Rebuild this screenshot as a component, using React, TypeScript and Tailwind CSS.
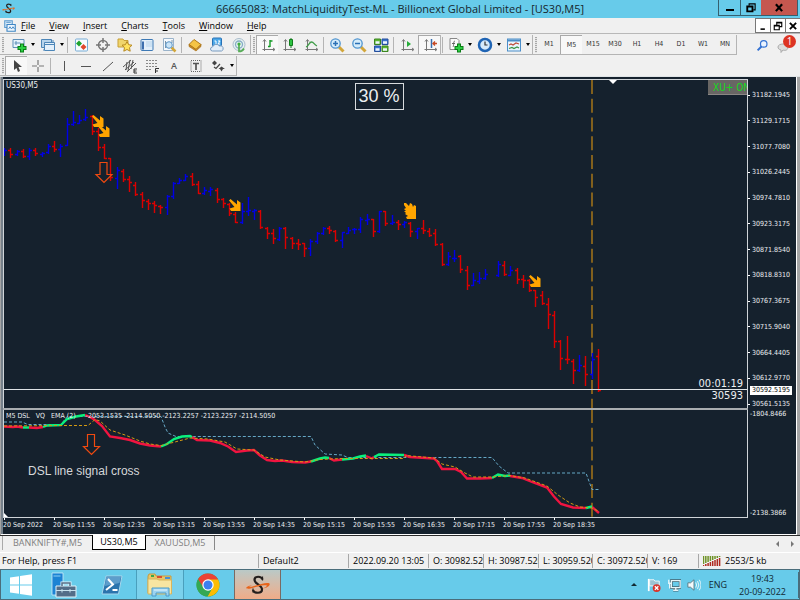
import type { ReactNode } from "react"
import clsx from "clsx"

type Bar = { up: boolean; high: number; low: number; open: number; close: number }

const u = (high: number, low: number, open: number, close: number): Bar => ({ up: true, high, low, open, close })
const d = (high: number, low: number, open: number, close: number): Bar => ({ up: false, high, low, open, close })

const BARS: (Bar | null)[] = [
  u(148, 155, 154, 150), d(148, 157, 150, 154), u(150, 155, 154, 151), d(149, 157, 151, 156),
  u(148, 159, 156, 150), d(148, 155, 150, 153), u(152, 156, 154, 153), u(144, 153, 152, 146),
  d(141, 151, 146, 149), u(144, 156, 149, 146), u(118, 145, 145, 124), u(111, 125, 124, 122),
  u(115, 123, 123, 120), u(109, 120, 119, 117), d(115, 134, 116, 131), d(128, 150, 131, 147),
  d(144, 158, 147, 158), d(158, 180, 158, 177), u(167, 188, 178, 170), d(169, 181, 171, 179),
  d(176, 191, 179, 182), d(182, 195, 185, 194), d(192, 207, 194, 200), d(199, 209, 201, 203),
  d(201, 212, 203, 205), d(205, 213, 206, 207), u(195, 214, 207, 196), u(182, 198, 196, 183),
  u(178, 183, 183, 180), u(174, 180, 180, 176), d(173, 185, 176, 184), d(181, 193, 184, 193),
  u(187, 194, 193, 190), u(187, 195, 191, 189), d(188, 202, 190, 199), d(198, 207, 199, 203),
  d(203, 215, 204, 213), d(212, 222, 214, 222), u(203, 223, 222, 211), u(197, 215, 211, 210),
  u(209, 219, 211, 210), d(210, 228, 211, 227), d(227, 238, 228, 233), d(229, 243, 233, 238),
  u(227, 240, 239, 228), d(227, 248, 228, 237), d(237, 248, 238, 243), d(239, 249, 243, 244),
  d(243, 256, 243, 248), u(239, 255, 248, 241), u(232, 243, 241, 233), u(227, 234, 233, 228),
  d(226, 233, 228, 230), d(230, 241, 231, 240), u(232, 247, 240, 232), u(227, 233, 233, 230),
  u(228, 233, 229, 229), u(217, 232, 229, 219), u(214, 224, 220, 219), d(219, 236, 219, 231),
  u(211, 232, 231, 211), d(211, 225, 211, 223), u(215, 224, 223, 222), d(220, 229, 222, 224),
  u(221, 227, 224, 222), d(222, 236, 223, 231), u(228, 238, 231, 228), d(220, 233, 228, 230),
  d(228, 236, 231, 235), d(229, 245, 233, 244), d(243, 265, 244, 264), u(252, 265, 264, 256),
  u(250, 261, 258, 258), d(255, 272, 256, 269), d(266, 289, 270, 285), u(273, 285, 285, 280),
  u(272, 283, 281, 278), u(269, 279, 278, 274), null, u(261, 276, 275, 264),
  d(261, 275, 265, 274), u(266, 275, 275, 270), d(268, 283, 270, 279), d(275, 287, 279, 280),
  d(279, 291, 280, 290), d(290, 306, 290, 297), d(291, 304, 295, 303), d(298, 328, 304, 314),
  d(311, 347, 315, 341), d(340, 369, 341, 358), d(336, 363, 359, 359), d(359, 383, 361, 370),
  u(355, 371, 370, 365), d(356, 385, 366, 374), u(353, 378, 374, 359), d(349, 391, 356, 390),
]

const PRICES = [
  "31182.1945", "31129.1715", "31077.7080", "31026.2445", "30974.7810", "30923.3175", "30871.8540",
  "30818.8310", "30767.3675", "30715.9040", "30664.4405", "30612.9770", "30561.5135",
]

const TIMES = [
  "20 Sep 2022", "20 Sep 11:55", "20 Sep 12:35", "20 Sep 13:15", "20 Sep 13:55", "20 Sep 14:35",
  "20 Sep 15:15", "20 Sep 15:55", "20 Sep 16:35", "20 Sep 17:15", "20 Sep 17:55", "20 Sep 18:35",
]

const DSL_DOWN = [
  "4,426.5 13,427 17,426.5 23,427.5",
  "29,427.5 37,428 43,427",
  "85,415 90,417 95,420 102,426 110,436.5 120,438 130,440 140,443.5 150,445.5 161,446.5",
  "192,437 197,440 210,440.5 220,443 228,446.5 236,452 247,450.5 254,450 260,455.5 267,460 275,461 282,460.5 292,462 305,462.5 311,461.5",
  "329,458 334,460.5 342,459.5",
  "366,456 372,458.5 374,457",
  "404,455 410,457 434,458.5 437,461 442,469 455,469 461,472 467,478.5 480,478.5 492,478",
  "510,476 522,478 532,482 547,487.5 554,496.5 561,504 573,507.5 586,508",
  "592,507 599,513",
]

const DSL_UP = [
  "23,427.5 29,427.5",
  "43,427 47,425.5 61,425 67,419 76,416.5 85,415",
  "161,446.5 167,444 174,439 182,436.5 190,436 192,437",
  "311,461.5 320,458.5 325,457.5 329,458",
  "342,459.5 353,458.5 360,456.5 366,455.5",
  "374,457 379,454.5 404,455",
  "492,478 498,474.5 505,476 510,475.5",
  "586,508 592,506.5",
]

const PRICE_TOP = `${((389 - 80) / 328) * 100}%`

function Icon({ children, size = 16 }: { children: ReactNode; size?: number }) {
  return (
    <svg width={size} height={size} viewBox="0 0 16 16" fill="none" aria-hidden="true" className="shrink-0">
      {children}
    </svg>
  )
}

const Caret = () => <span className="border-x-2 border-t-3 border-x-transparent border-t-black" />

const Sep = () => <span className="mr-0.5 ml-px h-4 w-px shrink-0 bg-[#b4b4b4]" />

const Grip = () => (
  <span className="mx-px h-4 w-[2px] shrink-0 bg-[repeating-linear-gradient(#a8a8a8_0_1px,#e4e4e4_1px_2px)]" />
)

function Tool({ label, pressed, menu, children }: { label: string; pressed?: boolean; menu?: boolean; children: ReactNode }) {
  return (
    <button
      aria-label={label}
      className={clsx(
        "flex h-full shrink-0 items-center justify-center",
        menu ? "w-[29px] gap-1" : "w-[22px]",
        pressed && "border-t border-l border-[#a9a9a9] bg-[#f8f8f8]",
      )}
    >
      {children}
      {menu && <Caret />}
    </button>
  )
}

function Group({ children }: { children: ReactNode }) {
  return (
    <div className="flex h-full shrink-0 items-center border-r border-b border-[#b4b4b4] pl-px">
      <Grip />
      {children}
    </div>
  )
}

const Axes = () => <path d="M4.500 3v11M2.500 12.500h12M3 4.500l1.500-2 1.500 2M13 11l2 1.500-2 1.500" stroke="#777" />

const Swirl = ({ size }: { size: number }) => (
  <svg width={size} height={size} viewBox="0 0 24 24" fill="none" aria-hidden="true">
    <path
      d="M16.500 6.500C15.500 3 8.500 2.500 8.500 7c0 4 7.500 5 7.500 9.500 0 4.500-8 4-9 .5"
      stroke="#241e1c"
      strokeWidth="2.200"
    />
    <path d="M7 19.500v-4M16.500 3.500v4" stroke="#241e1c" strokeWidth="1.200" />
    <path d="M8 14.500C-2 18-2 13 6 12.500c-4 1.300-3.500 2.300 2 .6C15 11 21 9 23.500 10.500c1 2-2 4.500-7 5 5-2 6-3.700 1.500-3.200-3.500.4-6.500 1.200-10 2.200z" fill="#e8641a" />
  </svg>
)

function TitleBar() {
  return (
    <header className="relative flex h-[18px] items-start justify-between bg-[#67cbea] pl-0.5">
      <span className="pt-0.5">
        <Swirl size={13} />
      </span>
      <h1 className="absolute inset-x-0 text-center font-['Open_Sans',sans-serif] text-[11px] leading-[18px] text-[#16262c]">
        66665083: MatchLiquidityTest-ML - Billionext Global Limited - [US30,M5]
      </h1>
      <div className="relative mr-0.5 flex h-4 border border-t-0 border-[#35606f]">
        <button aria-label="Minimize" className="flex w-[22px] items-center justify-center border-r border-[#35606f]">
          <span className="mt-1 h-0.5 w-2 bg-black" />
        </button>
        <button aria-label="Restore" className="flex w-5 items-center justify-center">
          <Icon size={12}>
            <path d="M5.500 5V2.500h8v8H11" stroke="#000" strokeWidth="1.500" />
            <path d="M3 6h7v6.500H3z" stroke="#000" strokeWidth="2.500" />
          </Icon>
        </button>
        <button aria-label="Close" className="flex w-9 items-center justify-center bg-[#c5574f]">
          <Icon size={10}>
            <path d="M3 2l10 11M13 2L3 13" stroke="#000" strokeWidth="3.500" />
          </Icon>
        </button>
      </div>
    </header>
  )
}

const MENU = ["File", "View", "Insert", "Charts", "Tools", "Window", "Help"]

function MenuBar() {
  return (
    <nav className="flex h-4 items-center border-b border-[#b8b8b8] bg-[#f0f0f0] pl-1 font-['Open_Sans',sans-serif] text-[9px] text-black">
      <Icon size={12}>
        <path d="M1 1h10v9H1z" fill="#dcecf9" stroke="#5b9bd0" strokeWidth="1.500" />
        <path d="M4 6h11v9H4z" fill="#eef6fd" stroke="#3f86c4" strokeWidth="1.500" />
        <path d="M6 12l2-3 2 3 2-3 2 3M3 3h6" stroke="#3f86c4" strokeWidth="1.200" />
      </Icon>
      <div className="ml-[5px] flex flex-1 gap-[14px]">
        {MENU.map((item) => (
          <button key={item}>
            <span className="underline">{item[0]}</span>
            {item.slice(1)}
          </button>
        ))}
      </div>
      <div className="flex h-full">
        {["Minimize chart", "Restore chart", "Close chart"].map((label, i) => (
          <button key={label} aria-label={label} className="flex w-[15px] items-center justify-center border border-r-0 border-[#777] bg-white">
            <Icon size={10}>
              {i === 0 && <path d="M4 13h7" stroke="#000" strokeWidth="2.500" />}
              {i === 1 && <path d="M6 6V2h8v7h-3M6 3h8M2 7h8v7H2zM2 8h8" stroke="#000" strokeWidth="1.800" />}
              {i === 2 && <path d="M3 3l10 10M13 3L3 13" stroke="#000" strokeWidth="3" />}
            </Icon>
          </button>
        ))}
      </div>
    </nav>
  )
}

const FRAMES = ["M1", "M5", "M15", "M30", "H1", "H4", "D1", "W1", "MN"]

const Plus = () => (
  <>
    <path d="M11 6.500v9M6.500 11h9" stroke="#0b7d16" strokeWidth="4" />
    <path d="M11 7.500v7M7.500 11h7" stroke="#2bd043" strokeWidth="2" />
  </>
)

function Zoom({ minus }: { minus?: boolean }) {
  return (
    <Icon>
      <path d="M10 10l4.500 4.500" stroke="#d2a63a" strokeWidth="3" />
      <circle cx="6.500" cy="6.500" r="4.700" fill="#d5ecfa" stroke="#4f94cf" strokeWidth="1.300" />
      <path d={minus ? "M4 6.500h5" : "M4 6.500h5M6.500 4v5"} stroke="#2b70b5" strokeWidth="1.500" />
    </Icon>
  )
}

function MainToolbar() {
  return (
    <div className="flex h-[21px] items-center bg-[#f0f0f0] pt-px font-['Open_Sans',sans-serif]">
      <Group>
        <span className="w-[3px]" />
        <Tool label="New chart" menu>
          <Icon>
            <path d="M2 2.500h11v8H2z" fill="#e8f3fc" stroke="#5d8fb8" />
            <path d="M3.500 6h6M5 4v4" stroke="#5d8fb8" />
            <Plus />
          </Icon>
        </Tool>
        <Tool label="Profiles" menu>
          <Icon>
            <path d="M1.500 2.500h10v8h-10z" fill="#b5d3ec" stroke="#4c86b8" />
            <path d="M4.500 5.500h10v8h-10z" fill="#e3f0fb" stroke="#4c86b8" />
            <path d="M5 7.500h9M3 13h1M11 4h3" stroke="#4c86b8" />
          </Icon>
        </Tool>
        <Sep />
        <Tool label="Market watch">
          <Icon>
            <rect x="2.500" y="2" width="12" height="12" rx="1" fill="#f7fbff" stroke="#77add6" />
            <path d="M6 3.500L9 6.500 6 9.500 3 6.500z" fill="#1fa32e" />
            <path d="M10.500 7l3 3-3 3-3-3z" fill="#e0482d" />
          </Icon>
        </Tool>
        <Tool label="Data window">
          <Icon>
            <circle cx="8" cy="8" r="4.500" stroke="#777" strokeWidth="1.500" />
            <path d="M8 1v5M8 10v5M1 8h5M10 8h5" stroke="#777" strokeWidth="1.500" />
          </Icon>
        </Tool>
        <Tool label="Navigator">
          <Icon>
            <path d="M1 2h5l1 1.500h4V10H1z" fill="#f0d56c" stroke="#c79f36" />
            <path d="M10 4.500l1.600 3.200 3.400.5-2.500 2.400.7 3.600-3.200-1.700-3.200 1.700.7-3.600L5 8.200l3.400-.5z" fill="#ffe25d" stroke="#b88a22" />
          </Icon>
        </Tool>
        <Tool label="Terminal">
          <Icon>
            <rect x="2" y="2.500" width="12" height="11" rx="1" fill="#e2effa" stroke="#3d79b5" />
            <path d="M3 4.500h2v8H3z" fill="#3d6fae" />
            <path d="M7 5h6M7 7h6M7 9h6" stroke="#b7d4ec" />
          </Icon>
        </Tool>
        <Tool label="Strategy tester">
          <Icon>
            <path d="M2.500 1.500h10v12h-10z" fill="#f5f9fd" stroke="#9ab3ca" />
            <path d="M4.500 4v7M11 3v3" stroke="#7b93a8" />
            <path d="M10.500 10.500l4 4" stroke="#d2a63a" strokeWidth="2.500" />
            <circle cx="8" cy="8" r="3.300" fill="#cce5f7" stroke="#5b94c5" />
          </Icon>
        </Tool>
        <Sep />
        <Tool label="New order">
          <Icon>
            <path d="M2 7.500L7 2.500l7 5-5 5z" fill="#f5c445" stroke="#b0791b" />
            <path d="M2 7.500v2l7 4.500 5-4.500v-2l-5 5z" fill="#c98a20" stroke="#a26c15" strokeWidth=".6" />
          </Icon>
        </Tool>
        <Tool label="Virtual hosting">
          <Icon>
            <rect x="3.500" y="1" width="9" height="8" rx="1" fill="#4ba7e8" stroke="#2872b6" />
            <path d="M5.500 4H7v3M9 4h2L9 7h2" stroke="#fff" />
            <path d="M3.500 14a2 2 0 010-4 4 4 0 017-1 2.500 2.500 0 012 5z" fill="#e2edf8" stroke="#7b9cc0" />
          </Icon>
        </Tool>
        <Tool label="Signals">
          <Icon>
            <circle cx="8" cy="7.500" r="6" fill="#e6f0f2" stroke="#a9bccb" />
            <circle cx="8" cy="7.500" r="3.500" stroke="#86aec4" strokeWidth="1.300" />
            <path d="M8 7v7.500c2 0 4-1 5-3" stroke="#56ad55" strokeWidth="1.700" />
            <circle cx="8" cy="7" r="1.600" fill="#3daf41" />
          </Icon>
        </Tool>
      </Group>
      <Group>
        <Tool label="Bar chart" pressed>
          <Icon>
            <Axes />
            <path d="M10 3v7M8 9.500h2M10 4h2.500" stroke="#139a25" strokeWidth="1.400" />
          </Icon>
        </Tool>
        <Tool label="Candlesticks">
          <Icon>
            <Axes />
            <path d="M10 1v10" stroke="#117c1d" />
            <path d="M8.500 2.500h3v6h-3z" fill="#2ec442" stroke="#117c1d" />
          </Icon>
        </Tool>
        <Tool label="Line chart">
          <Icon>
            <Axes />
            <path d="M3 10c3-1 3-5 5.500-5S11 8 14 9" stroke="#3f9c48" strokeWidth="1.300" />
          </Icon>
        </Tool>
        <Sep />
        <Tool label="Zoom in"><Zoom /></Tool>
        <Tool label="Zoom out"><Zoom minus /></Tool>
        <Tool label="Tile windows">
          <Icon>
            <path d="M1.500 2h6v5.500h-6zM9 9h6v5.500H9z" fill="#5cb731" stroke="#3b8520" />
            <path d="M9 2h6v5.500H9zM1.500 9h6v5.500h-6z" fill="#3b74cf" stroke="#254f9c" />
            <path d="M2.500 5.500h4M10 5.500h4M2.500 12.500h4M10 12.500h4" stroke="#eef6ff" strokeWidth="2.500" />
          </Icon>
        </Tool>
        <Sep />
        <Tool label="Auto scroll">
          <Icon>
            <Axes />
            <path d="M8 4l4 3-4 3z" fill="#25ac38" />
          </Icon>
        </Tool>
        <Tool label="Chart shift" pressed>
          <Icon>
            <Axes />
            <path d="M9.500 2v9" stroke="#376dae" strokeWidth="1.500" />
            <path d="M15 6.500h-4M13 4.500l-2 2 2 2" stroke="#c74a25" strokeWidth="1.400" />
          </Icon>
        </Tool>
      </Group>
      <div className="flex h-full items-center border-r border-b border-[#b4b4b4]">
        <Sep />
        <Tool label="Indicators" menu>
          <Icon>
            <path d="M2 1.500h7l2 2v9H2z" fill="#fafafa" stroke="#888" />
            <path d="M7 4c-2 0-1 5-2 6M4 6.500h3" stroke="#666" />
            <Plus />
          </Icon>
        </Tool>
        <Tool label="Periods" menu>
          <Icon>
            <circle cx="8" cy="8" r="6" fill="#d6eafa" stroke="#1f64b4" strokeWidth="2.500" />
            <path d="M8 4.500V8h2.500" stroke="#333" strokeWidth="1.200" />
          </Icon>
        </Tool>
        <Tool label="Templates" menu>
          <Icon>
            <rect x="1.500" y="2" width="13" height="12" fill="#eaf5fd" stroke="#4b8dc8" />
            <path d="M2 3.500h12" stroke="#4b8dc8" strokeWidth="2" />
            <path d="M3 8l2-1 2 1 3-2 3 1" stroke="#c24e39" strokeWidth="1.200" />
            <path d="M3 11.500l3-1 2 1 3-1.500 2 1" stroke="#3a9444" strokeWidth="1.200" />
          </Icon>
        </Tool>
      </div>
      <Group>
        {FRAMES.map((frame) => (
          <button
            key={frame}
            className={clsx(
              "h-full w-[22px] text-center font-['DejaVu_Sans_Condensed','DejaVu_Sans',sans-serif] text-[7px] text-[#333]",
              frame === "M5" && "border-t border-l border-[#a9a9a9] bg-[#f8f8f8]",
            )}
          >
            {frame}
          </button>
        ))}
      </Group>
      <div className="ml-auto flex items-center gap-1 pr-1">
        <button aria-label="Search" className="mr-1">
          <Icon size={13}>
            <path d="M2 14l5-5" stroke="#3472d3" strokeWidth="2.500" />
            <circle cx="9.500" cy="6" r="4" fill="#eaf3ff" stroke="#3472d3" strokeWidth="1.500" />
          </Icon>
        </button>
        <button aria-label="Notifications" className="relative h-4 w-[19px]">
          <Icon>
            <path d="M1 10c0-4 10-4 10 0s-4 3.500-5 3L4 15.500V13C2 12.500 1 11.500 1 10z" fill="#ddd" stroke="#aaa" />
          </Icon>
          <span className="absolute -top-0.5 right-0 size-[13px] rounded-full bg-[#dd3423] text-center text-[10px] leading-[13px] text-white">
            1
          </span>
        </button>
      </div>
    </div>
  )
}

function DrawingToolbar() {
  return (
    <div className="flex h-[22px] items-center border-b border-[#e0e4e6] bg-[#f0f0f0] pt-px">
      <Group>
        <Tool label="Cursor" pressed>
          <Icon><path d="M5 2v10l2.500-2L9 14l2-1-1.500-4H13z" fill="#444" /></Icon>
        </Tool>
        <Tool label="Crosshair">
          <Icon><path d="M8 2v5M8 9v5M2 8h5M9 8h5" stroke="#777" strokeWidth="1.200" /></Icon>
        </Tool>
        <Sep />
        <Tool label="Vertical line">
          <Icon><path d="M8.500 3v10" stroke="#555" /></Icon>
        </Tool>
        <Tool label="Horizontal line">
          <Icon><path d="M3 8.500h10" stroke="#555" /></Icon>
        </Tool>
        <Tool label="Trendline">
          <Icon><path d="M3 13L13 4" stroke="#555" /></Icon>
        </Tool>
        <Tool label="Equidistant channel">
          <Icon>
            <path d="M1 9l8-7M3 12l9-8M5 14l9-9M5 4l-1 8M8 2L6 13M11 2l-2 9" stroke="#555" />
            <path d="M15 11h-3v4h3M12 13h2.500" stroke="#333" />
          </Icon>
        </Tool>
        <Tool label="Fibonacci">
          <Icon>
            <path d="M2 2.500h12M2 5.500h12M2 8.500h12M2 11.500h6" stroke="#888" strokeDasharray="2 1" />
            <path d="M11.500 15v-4.500H15M11.500 13H14" stroke="#333" />
          </Icon>
        </Tool>
        <Tool label="Text">
          <span className="font-['Open_Sans',sans-serif] text-[9px] font-semibold text-[#555]">A</span>
        </Tool>
        <Tool label="Text label">
          <Icon>
            <rect x="3" y="2.500" width="10" height="11" stroke="#666" strokeDasharray="1 1" />
            <path d="M5 5.500h6M8 5v7" stroke="#555" strokeWidth="1.700" />
          </Icon>
        </Tool>
        <Tool label="Arrows" menu>
          <Icon>
            <path d="M4.500 2.500L7 5 4.500 7.500 2 5z" fill="#444" />
            <path d="M4 9l2 1.500L10 6" stroke="#444" strokeWidth="1.200" />
            <path d="M11.500 8.500L15 11h-2l-1.500 2.500L10 11H8.500z" fill="#444" />
          </Icon>
        </Tool>
      </Group>
    </div>
  )
}

function Signal({ x, y, blunt }: { x: number; y: number; blunt?: boolean }) {
  return (
    <path
      transform={`translate(${x} ${y})`}
      d={
        blunt
          ? "M0 0h2l3 3 1-3 2 1 1 3 1-2 2 1v13H3l-1-2 2-1-3-2 1-1-2-2h2L0 6l2-1-2-3z"
          : "M0 1.500L1.500 0 8 5.500V1l3.500 2.500v8.500H2L.5 9.500 5.500 8z"
      }
      fill="#ffa500"
    />
  )
}

function DownArrow({ x, y }: { x: number; y: number }) {
  return (
    <path transform={`translate(${x} ${y})`} d="M-4 .5h7v12h5l-8 8-8-8h4z" stroke="#f04a10" fill="none" strokeWidth="1.200" />
  )
}

function PricePlot() {
  return (
    <svg viewBox="4 80 743 328" preserveAspectRatio="none" className="absolute inset-0 h-full w-full" aria-label="US30 price chart">
      <path d="M592 80V408" stroke="#b07c17" strokeWidth="1.400" strokeDasharray="14 4.750" />
      {BARS.map((bar, i) => {
        if (!bar) return null
        const x = Math.round(4 + i * 6.25) + 0.5
        return (
          <path
            key={i}
            d={`M${x} ${bar.high}V${bar.low + 1}M${x - 2.5} ${bar.open + 0.5}H${x}M${x} ${bar.close + 0.5}H${x + 2.5}`}
            stroke={bar.up ? "#0000e6" : "#dc0000"}
            strokeWidth="1.400"
          />
        )
      })}
      <path d="M4 389.500H748" stroke="#dfe3e6" />
      <path d="M609 80h8l-4 4z" fill="#fff" />
      <Signal x={92} y={115} />
      <Signal x={98} y={125} />
      <Signal x={229} y={199} />
      <Signal x={404} y={203} blunt />
      <Signal x={529} y={275} />
      <DownArrow x={104} y={162} />
    </svg>
  )
}

function DslPlot() {
  return (
    <svg viewBox="4 410 743 107" preserveAspectRatio="none" className="absolute inset-0 h-full w-full" fill="none" aria-label="DSL indicator">
      <path d="M592 409V517" stroke="#b07c17" strokeWidth="1.400" strokeDasharray="14 4.750" />
      <polyline
        points="4,422 22,422 28,424.5 61,424.5 67,416.5 161,416.5 165,427 168,433 176,436.5 311,436.5 315,445 325,454 342,455 348,457.5 492,457.5 499,466 508,473 586,473 592,489.5 599,489.5"
        stroke="#65a8c6"
        strokeDasharray="3 2"
      />
      {DSL_DOWN.map((points) => (
        <polyline key={points} points={points} stroke="#f01440" strokeWidth="2.400" />
      ))}
      {DSL_UP.map((points) => (
        <polyline key={points} points={points} stroke="#0af07c" strokeWidth="2.400" />
      ))}
      <polyline
        points="4,426 61,425.5 88,425.5 95,419.5 100,421 110,430 125,435 140,441 150,444 161,445.5 175,442 190,438 208,439 225,442 237,449 254,450 265,457 280,460 305,462 320,459.5 342,458.5 404,458.5 406,455.5 434,458 442,464 455,467 465,473 473,477 492,477 510,475.5 525,478 547,486 558,495 570,503 580,507 592,508 598,511"
        stroke="#d39a12"
        strokeDasharray="3 2"
      />
      <DownArrow x={91.5} y={434} />
      <path d="M4 513l4 4H4z" fill="#fff" />
    </svg>
  )
}

function ChartWindow() {
  return (
    <main className="flex min-h-0 flex-1 border-r-3 border-l border-[#a4a4a4] bg-white pr-px font-['DejaVu_Sans_Condensed','DejaVu_Sans',sans-serif] text-[7px] text-[#eceff1]">
      <div className="mb-px flex min-w-0 flex-1 flex-col border-l-2 border-[#75808a] bg-[#15212d] pt-0.5">
        <section className="flex min-h-0 flex-1">
          <div className="relative min-w-0 flex-1 overflow-hidden border-t border-r border-l border-[#cfd4d8]">
            <PricePlot />
            <h2 className="absolute top-0.5 left-0.5 text-[8px] leading-[8px]">US30,M5</h2>
            <output className="absolute top-[3px] left-1/2 -ml-[21px] border border-[#d7dbde] px-[3px] font-['Liberation_Sans',sans-serif] text-[18px] leading-[25px]">
              30 %
            </output>
            <button className="absolute top-0 -right-2 h-[15px] border-b border-[#8a8784] bg-[#686664] px-[5px] text-[10px] text-[#12dc1c]">
              XU+ ON
            </button>
            <p className="absolute right-1 -mt-[11px] text-right text-[11px] leading-3" style={{ top: PRICE_TOP }}>
              00:01:19
              <br />
              30593
            </p>
          </div>
          <div className="relative flex w-12 flex-col justify-between pt-3">
            {PRICES.map((price) => (
              <span key={price} className="flex items-center gap-0.5 leading-[8px]">
                <i className="h-px w-0.5 bg-white" />
                {price}
              </span>
            ))}
            <strong
              className="absolute right-1 left-0.5 -mt-[3px] bg-white pl-0.5 leading-[9px] font-normal text-black"
              style={{ top: PRICE_TOP }}
            >
              30592.5195
            </strong>
          </div>
        </section>
        <div className="mr-12 h-[2px] bg-[#a9adb0]" />
        <section className="flex h-[108px]">
          <div className="relative min-w-0 flex-1 overflow-hidden border-r border-b border-l border-[#cfd4d8]">
            <DslPlot />
            <p className="absolute top-0.5 left-0.5 leading-[8px] whitespace-pre">
              {"M5 DSL   VQ   EMA (2)     -2053.1535 -2114.5050 -2123.2257 -2123.2257 -2114.5050"}
            </p>
            <p className="absolute top-[53px] left-6 font-['Liberation_Sans',sans-serif] text-[12px] leading-4 text-[#d5d8da]">
              DSL line signal cross
            </p>
          </div>
          <div className="flex w-12 flex-col justify-between pb-px pl-0.5 leading-[8px]">
            <span>-1804.8466</span>
            <span>-2138.3866</span>
          </div>
        </section>
        <div className="flex h-4 overflow-hidden">
          {TIMES.map((time) => (
            <span key={time} className="w-[50px] shrink-0 leading-[10px] whitespace-nowrap">
              <i className="ml-px block h-0.5 w-px bg-white" />
              {time}
            </span>
          ))}
        </div>
      </div>
    </main>
  )
}

function ChartTabs() {
  return (
    <div className="flex h-[17px] items-start border-t border-[#2c2c2c] bg-[#f0f0f0] font-['Open_Sans',sans-serif] text-[9px] leading-[14px] text-[#808080]">
      <button className="ml-0.5 w-[90px] border-l border-[#aaa]">BANKNIFTY#,M5</button>
      <button className="-mt-px w-[54px] border border-t-0 border-black bg-white text-black">US30,M5</button>
      <button className="w-[69px] border-r border-[#888]">XAUUSD,M5</button>
      <div className="ml-auto flex h-full items-center gap-3 pr-1.5">
        <button aria-label="Scroll left" className="border-y-3 border-r-3 border-y-transparent border-r-[#777]" />
        <button aria-label="Scroll right" className="border-y-3 border-l-3 border-y-transparent border-l-[#777]" />
      </div>
    </div>
  )
}

function StatusCell({ width, children }: { width: string; children: ReactNode }) {
  return (
    <span className={clsx("h-[14px] shrink-0 overflow-hidden border-l border-[#a8a8a8] pl-1 leading-[14px]", width)}>{children}</span>
  )
}

function StatusBar() {
  return (
    <footer className="flex h-[17px] items-center border-t border-white bg-[#f0f0f0] font-['Open_Sans',sans-serif] text-[9px] whitespace-nowrap text-black">
      <span className="flex-1 pl-0.5">For Help, press F1</span>
      <StatusCell width="w-[90px]">Default2</StatusCell>
      <StatusCell width="w-20">2022.09.20 13:05</StatusCell>
      <StatusCell width="w-[55px]">O: 30982.520</StatusCell>
      <StatusCell width="w-[55px]">H: 30987.520</StatusCell>
      <StatusCell width="w-[54px]">L: 30959.520</StatusCell>
      <StatusCell width="w-[55px]">C: 30972.520</StatusCell>
      <StatusCell width="w-[51px]">V: 169</StatusCell>
      <StatusCell width="w-[102px]">
        <span className="flex items-center gap-1">
          <svg width="18" height="12" viewBox="0 0 18 12" aria-hidden="true">
            {[0, 1, 2, 3, 4, 5, 6, 7].map((n) => (
              <g key={n}>
                <path d={`M${n * 2.3 + 0.5} 1V${9 - n}`} stroke="#6f9226" strokeWidth="1.500" />
                <path d={`M${n * 2.3 + 0.5} ${10 - n}V11`} stroke="#b02b20" strokeWidth="1.500" />
              </g>
            ))}
          </svg>
          2553/5 kb
        </span>
      </StatusCell>
    </footer>
  )
}

function Taskbar() {
  return (
    <div className="flex h-[31px] items-stretch border border-[#4a6d7b] bg-[#67cbea] font-['Open_Sans',sans-serif] text-[#122a33]">
      <button aria-label="Start" className="flex w-[39px] items-center justify-center">
        <svg width="22" height="22" viewBox="0 0 22 22" fill="#fff" aria-hidden="true">
          <path d="M0 3.500l9-1.300v8.300H0zM10 2l12-1.700v10.200H10zM0 11.500h9v8.300l-9-1.300zM10 11.500h12v10.200L10 20z" />
        </svg>
      </button>
      <button aria-label="Server Manager" className="flex w-12 items-center justify-center">
        <svg width="26" height="26" viewBox="0 0 26 26" fill="none" aria-hidden="true">
          <path d="M1 1h11v22H1z" fill="#1c83d4" stroke="#d0ecf9" strokeWidth=".8" />
          <path d="M2.500 4h7" stroke="#8fd0f4" />
          <path d="M5 14h20v11H5z" fill="#536d88" stroke="#e4f4fb" />
          <path d="M11 14v-3h8v3" stroke="#e4f4fb" strokeWidth="3" />
          <path d="M11 14v-3h8v3" stroke="#536d88" strokeWidth="1.500" />
          <path d="M5 18.500h20M11 17v3.500M19 17v3.500" stroke="#c8e1ed" />
        </svg>
      </button>
      <button aria-label="PowerShell" className="flex w-12 items-center justify-center">
        <svg width="22" height="22" viewBox="0 0 22 22" fill="none" aria-hidden="true">
          <path d="M5 2h16l-3.500 18H1z" fill="#2b74ad" stroke="#a7d7ed" />
          <path d="M5 3h15l-1.500 6L4 12z" fill="#5d9dcb" />
          <path d="M7 5l5 5.500L5 16M11.500 16h5" stroke="#fff" strokeWidth="2" />
        </svg>
      </button>
      <button aria-label="File Explorer" className="flex w-12 items-center justify-center border-x border-[#4a9fbd] bg-[#7bd1ec]">
        <svg width="26" height="24" viewBox="0 0 26 24" fill="none" aria-hidden="true">
          <path d="M1 3l1-2h6l1 2h15v17H1z" fill="#e9c667" stroke="#c69b3e" />
          <path d="M4 3h3" stroke="#38a84b" strokeWidth="2" />
          <path d="M10 4h5" stroke="#d8502f" strokeWidth="2" />
          <path d="M18 5h5" stroke="#4a90d0" strokeWidth="2" />
          <path d="M1 6h9l2 1h12.500v14H1z" fill="#f7e5a1" stroke="#d9b55c" />
          <path d="M5 23v-8h17v8h-3v-3H9v3z" fill="#9cd3f0" stroke="#4b9bc9" />
          <path d="M7 17h13" stroke="#e6f7ff" />
        </svg>
      </button>
      <button aria-label="Chrome" className="flex w-12 items-center justify-center">
        <svg width="24" height="24" viewBox="0 0 24 24" aria-hidden="true">
          <circle cx="12" cy="12" r="11.500" fill="#34a853" />
          <path d="M12 12L2 6.300A11.500 11.500 0 0122 6.300V7H12z" fill="#ea4335" />
          <path d="M2 6.300L8 16l4-3.500V7H7z" fill="#ea4335" />
          <path d="M12 6.500h10.100A11.500 11.500 0 0111.500 23.500L17 14z" fill="#fbbc04" />
          <path d="M2 6.300A11.500 11.500 0 0011.500 23.500L16 15l-9-1z" fill="#34a853" />
          <circle cx="12" cy="12" r="5.700" fill="#fff" />
          <circle cx="12" cy="12" r="4.500" fill="#3c7ff0" />
        </svg>
      </button>
      <button
        aria-label="MetaTrader"
        className="ml-0.5 flex w-[47px] items-center justify-center border border-y-0 border-[#7a6a62] bg-linear-to-b from-[#b9c9c7] to-[#efab87]"
      >
        <Swirl size={24} />
      </button>
      <div className="ml-auto flex items-center gap-[6px] text-[9px]">
        <button aria-label="Show hidden icons" className="mr-1 border-x-3 border-b-3 border-x-transparent border-b-[#122a33]" />
        <Icon size={14}>
          <path d="M2 1v14" stroke="#fff" strokeWidth="2" />
          <path d="M3 2h5l1 1.500h5V10H9L8 9H3z" fill="#9cc4d2" stroke="#f5fbfd" />
          <circle cx="11" cy="11.500" r="4.500" fill="#d8352b" />
          <path d="M9 9.500l4 4M13 9.500l-4 4" stroke="#fff" strokeWidth="1.500" />
        </Icon>
        <Icon size={14}>
          <path d="M5 3h10v8H5zM7 14h6M10 11v3" stroke="#43626e" strokeWidth="3" />
          <path d="M5 3h10v8H5zM7 14h6M10 11v3M2 2v4h3M3 6v6" stroke="#e6f5fa" strokeWidth="1.500" />
        </Icon>
        <Icon size={14}>
          <path d="M1 5.500h3L8 2v12l-4-3.500H1z" fill="#f4fafc" stroke="#54737e" />
          <path d="M10 5q2 3 0 6M12 3.500q3 4.500 0 9M14 2q4 6 0 12" stroke="#f4fafc" />
        </Icon>
        <div className="flex items-center pl-0.5">
          <span>ENG</span>
          <div className="w-[72px] border-r border-[#4a6d7b] text-center leading-[13px]">
            <time>19:43</time>
            <br />
            <time>20-09-2022</time>
          </div>
        </div>
      </div>
    </div>
  )
}

export default function App() {
  return (
    <div className="flex h-screen flex-col overflow-hidden bg-[#f0f0f0]">
      <TitleBar />
      <MenuBar />
      <MainToolbar />
      <DrawingToolbar />
      <ChartWindow />
      <ChartTabs />
      <StatusBar />
      <Taskbar />
    </div>
  )
}
